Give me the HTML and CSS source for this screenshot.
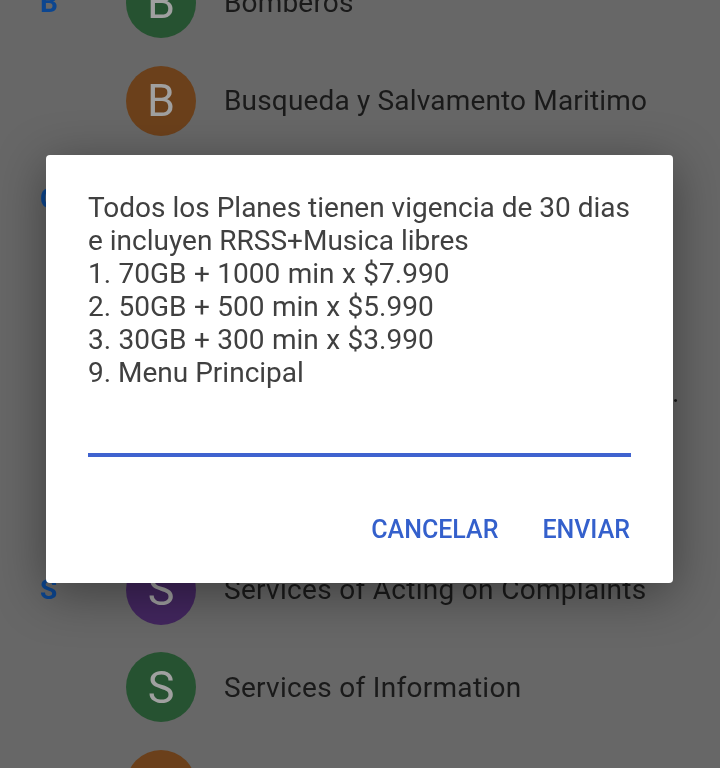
FILE: index.html
```html
<!DOCTYPE html>
<html lang="es">
<head>
    <meta charset="UTF-8">
    <meta name="viewport" content="width=device-width, initial-scale=1.0">
    <title>Servicios</title>
    <link rel="stylesheet" href="styles.css">
</head>
<body>
    <div class="contact-list">
        <div class="row">
            <span class="section-letter">B</span>
            <span class="avatar avatar-green">B</span>
            <span class="name">Bomberos</span>
        </div>
        <div class="row">
            <span class="section-letter"></span>
            <span class="avatar avatar-orange">B</span>
            <span class="name">Busqueda y Salvamento Maritimo</span>
        </div>
        <div class="row">
            <span class="section-letter">C</span>
            <span class="avatar avatar-green"></span>
            <span class="name"></span>
        </div>
        <div class="row">
            <span class="section-letter"></span>
            <span class="avatar avatar-orange"></span>
            <span class="name"></span>
        </div>
        <div class="row">
            <span class="section-letter"></span>
            <span class="avatar avatar-purple"></span>
            <span class="name name-dot">.</span>
        </div>
        <div class="row">
            <span class="section-letter"></span>
            <span class="avatar avatar-green"></span>
            <span class="name"></span>
        </div>
        <div class="row">
            <span class="section-letter">S</span>
            <span class="avatar avatar-purple">S</span>
            <span class="name name-wide">Services of Acting on Complaints</span>
        </div>
        <div class="row">
            <span class="section-letter"></span>
            <span class="avatar avatar-green">S</span>
            <span class="name name-wide">Services of Information</span>
        </div>
        <div class="row">
            <span class="section-letter"></span>
            <span class="avatar avatar-orange"></span>
            <span class="name"></span>
        </div>
    </div>

    <div class="dialog">
        <div class="dialog-text">
            <p>Todos los Planes tienen vigencia de 30 dias</p>
            <p>e incluyen RRSS+Musica libres</p>
            <p class="plan">1. 70GB + 1000 min x $7.990</p>
            <p class="plan">2. 50GB + 500 min x $5.990</p>
            <p class="plan">3. 30GB + 300 min x $3.990</p>
            <p>9. Menu Principal</p>
        </div>
        <div class="dialog-input"></div>
        <div class="dialog-buttons">
            <button type="button">CANCELAR</button>
            <button type="button">ENVIAR</button>
        </div>
    </div>
</body>
</html>
```

FILE: styles.css
```css
html, body {
    height: 100%;
}
body {
    font-family: 'Roboto', sans-serif;
    margin: 0;
    background-color: #676767;
    overflow: hidden;
    position: relative;
}
.contact-list {
    margin-top: -46px;
    filter: blur(0.5px);
}
.row {
    display: flex;
    align-items: center;
    height: 97.8px;
}
.section-letter {
    width: 126px;
    padding-left: 40px;
    box-sizing: border-box;
    font-size: 28px;
    font-weight: 700;
    color: #0c4690;
}
.avatar {
    flex: none;
    display: flex;
    align-items: center;
    justify-content: center;
    width: 70px;
    height: 70px;
    border-radius: 50%;
    font-size: 45px;
    color: #a0a0a0;
}
.avatar-green {
    background-color: #265231;
}
.avatar-orange {
    background-color: #6b401b;
}
.avatar-purple {
    background-color: #42265e;
}
.name {
    margin-left: 28px;
    font-size: 28px;
    letter-spacing: 0.17px;
    color: #1a1a1a;
}
.name-wide {
    letter-spacing: 0.3px;
}
.name-dot {
    margin-left: 476px;
    padding-bottom: 4px;
}
.dialog {
    position: absolute;
    top: 155px;
    left: 46px;
    width: 627px;
    height: 428px;
    box-sizing: border-box;
    padding: 36px 42px 0;
    background: white;
    border-radius: 4px;
    box-shadow: 0 10px 50px rgba(0,0,0,0.4);
}
.dialog-text {
    font-size: 28px;
    line-height: 33px;
    color: #404040;
    filter: blur(0.3px);
}
.dialog-text p {
    margin: 0;
}
.dialog-text .plan {
    word-spacing: 0.5px;
}
.dialog-input {
    margin-top: 64px;
    height: 4px;
    background-color: #3f63cf;
}
.dialog-buttons {
    display: flex;
    justify-content: flex-end;
    gap: 44px;
    margin-top: 58px;
    padding-right: 1px;
}
.dialog-buttons button {
    background: none;
    border: none;
    padding: 0;
    font-family: inherit;
    font-size: 25px;
    font-weight: 500;
    line-height: 30px;
    color: #3460cc;
    filter: blur(0.3px);
}
```
